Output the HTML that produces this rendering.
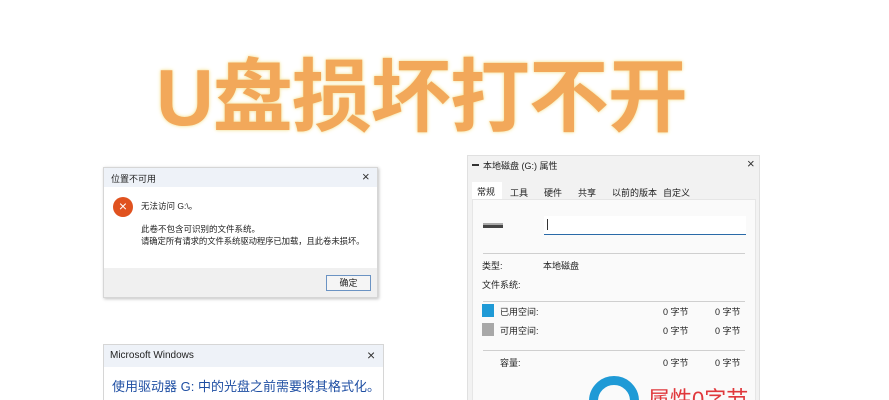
<!DOCTYPE html>
<html><head><meta charset="utf-8"><style>
*{margin:0;padding:0;box-sizing:border-box}
html,body{width:889px;height:400px;overflow:hidden}
body{background:#fff;position:relative;font-family:"Liberation Sans","Noto Sans CJK SC",sans-serif;color:#222}
.abs{position:absolute}
.title{left:156px;top:48px;font-size:80px;font-weight:bold;color:#f2a85a;letter-spacing:-1px;white-space:nowrap;text-shadow:0 0 4px #f6e7a8,0 0 2px #f6e7a8;line-height:100px}
.s{font-size:9px;white-space:nowrap}
</style></head><body>
<div class="abs title">U盘损坏打不开</div>

<!-- dialog 1 -->
<div class="abs" style="left:103px;top:167px;width:275px;height:131px;background:#fff;border:1px solid #d6d6d6;box-shadow:1px 1px 3px rgba(0,0,0,.25)">
 <div class="abs" style="left:0;top:0;width:273px;height:19px;background:#eef2f8"></div>
 <div class="abs s" style="left:7px;top:4px">位置不可用</div>
 <div class="abs" style="left:258px;top:1px;font-size:13px;color:#333">×</div>
 <div class="abs" style="left:9px;top:29px;width:20px;height:20px;border-radius:50%;background:#e0521f;color:#fff;font-size:14px;text-align:center;line-height:19px">×</div>
 <div class="abs s" style="left:37px;top:32px;font-size:8.5px">无法访问 G:\。</div>
 <div class="abs s" style="left:37px;top:55px;font-size:8.5px">此卷不包含可识别的文件系统。</div>
 <div class="abs s" style="left:37px;top:67px;font-size:8.4px;letter-spacing:-0.1px">请确定所有请求的文件系统驱动程序已加载，且此卷未损坏。</div>
 <div class="abs" style="left:0;top:100px;width:273px;height:29px;background:#f0f0f0"></div>
 <div class="abs s" style="left:222px;top:107px;width:45px;height:16px;border:1px solid #6b93c3;background:#f5f5f5;text-align:center;line-height:14px">确定</div>
</div>

<!-- dialog 3 -->
<div class="abs" style="left:103px;top:344px;width:281px;height:56px;background:#fff;border:1px solid #d6d6d6;border-bottom:none;overflow:hidden">
 <div class="abs" style="left:0;top:0;width:279px;height:22px;background:#eef2f8"></div>
 <div class="abs" style="left:6px;top:5px;font-size:10px">Microsoft Windows</div>
 <div class="abs" style="left:263px;top:2px;font-size:14px;color:#333">×</div>
 <div class="abs" style="left:8px;top:31px;font-size:13px;color:#1f4fa3;white-space:nowrap">使用驱动器 G: 中的光盘之前需要将其格式化。</div>
</div>

<!-- properties -->
<div class="abs" style="left:467px;top:155px;width:293px;height:245px;background:#f2f2f2;border:1px solid #e0e0e0;border-bottom:none;overflow:hidden">
 <div class="abs" style="left:4px;top:8px;width:7px;height:2px;background:#333"></div>
 <div class="abs s" style="left:15px;top:3px">本地磁盘 (G:) 属性</div>
 <div class="abs" style="left:279px;top:0px;font-size:13px;color:#333">×</div>
 <div class="abs" style="left:4px;top:26px;width:30px;height:18px;background:#fff"></div>
 <div class="abs s" style="left:9px;top:29px">常规</div>
 <div class="abs s" style="left:42px;top:30px">工具</div>
 <div class="abs s" style="left:76px;top:30px">硬件</div>
 <div class="abs s" style="left:110px;top:30px">共享</div>
 <div class="abs s" style="left:144px;top:30px">以前的版本</div>
 <div class="abs s" style="left:195px;top:30px">自定义</div>
 <div class="abs" style="left:4px;top:43px;width:284px;height:210px;background:#fafafa;border:1px solid #e6e6e6"></div>
 <div class="abs" style="left:15px;top:67px;width:20px;height:5px;background:#444;border-top:2px solid #aaa"></div>
 <div class="abs" style="left:76px;top:60px;width:202px;height:19px;background:#fff;border-bottom:1.5px solid #2a6aa8"></div>
 <div class="abs" style="left:79px;top:63px;width:1px;height:11px;background:#333"></div>
 <div class="abs" style="left:15px;top:97px;width:262px;height:1px;background:#cfcfcf"></div>
 <div class="abs s" style="left:14px;top:103px">类型:</div>
 <div class="abs s" style="left:75px;top:103px">本地磁盘</div>
 <div class="abs s" style="left:14px;top:122px">文件系统:</div>
 <div class="abs" style="left:15px;top:145px;width:262px;height:1px;background:#cfcfcf"></div>
 <div class="abs" style="left:14px;top:148px;width:12px;height:13px;background:#1f9ad6"></div>
 <div class="abs s" style="left:32px;top:149px">已用空间:</div>
 <div class="abs s" style="left:195px;top:149px">0 字节</div>
 <div class="abs s" style="left:247px;top:149px">0 字节</div>
 <div class="abs" style="left:14px;top:167px;width:12px;height:13px;background:#a8a8a8"></div>
 <div class="abs s" style="left:32px;top:168px">可用空间:</div>
 <div class="abs s" style="left:195px;top:168px">0 字节</div>
 <div class="abs s" style="left:247px;top:168px">0 字节</div>
 <div class="abs" style="left:15px;top:194px;width:262px;height:1px;background:#cfcfcf"></div>
 <div class="abs s" style="left:32px;top:200px">容量:</div>
 <div class="abs s" style="left:195px;top:200px">0 字节</div>
 <div class="abs s" style="left:247px;top:200px">0 字节</div>
 <div class="abs" style="left:121px;top:220px;width:50px;height:50px;border-radius:50%;border:9px solid #1f9ad6"></div>
 <div class="abs" style="left:180px;top:226px;font-size:22px;color:#e0383c;white-space:nowrap">属性0字节</div>
</div>
</body></html>
